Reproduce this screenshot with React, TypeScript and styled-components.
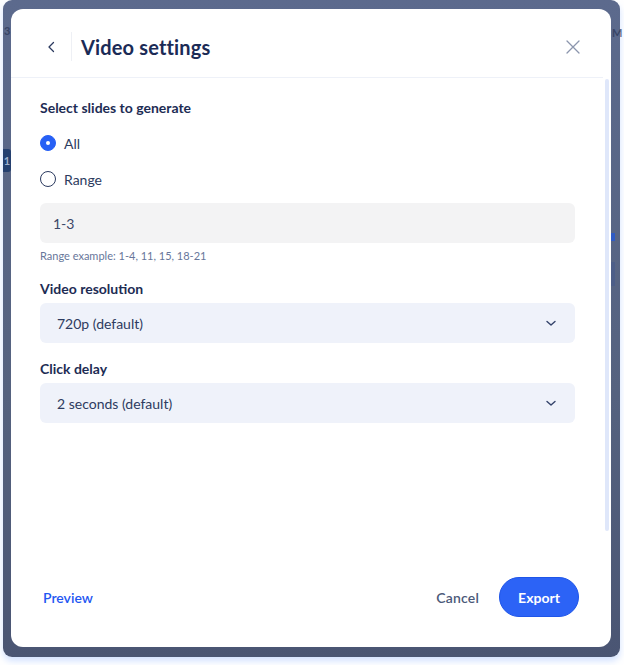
import styled, { createGlobalStyle } from "styled-components";

const GlobalStyle = createGlobalStyle`
  html, body {
    margin: 0;
    padding: 0;
    background: #ffffff;
  }
  body {
    font-family: Lato, "Noto Sans", "Liberation Sans", sans-serif;
    -webkit-font-smoothing: antialiased;
  }
  * {
    box-sizing: border-box;
  }
`;

const Page = styled.div`
  width: 624px;
  height: 665px;
  padding-left: 3px;
`;

const Backdrop = styled.div`
  position: relative;
  width: 617px;
  height: 657px;
  padding: 9px 9px 10px 8px;
  border-radius: 9px;
  background: linear-gradient(180deg, #5c6a8d 0%, #55627f 60%, #4a5573 100%);
  box-shadow: 0 4px 7px rgba(125, 170, 255, 0.35);
`;

// bits of the editor peeking out from under the overlay
const SlideChip = styled.span`
  position: absolute;
  left: 0;
  top: 149px;
  width: 8px;
  height: 23px;
  border-radius: 0 3px 3px 0;
  background: #25406f;
  color: #9fb0cc;
  font-size: 11px;
  font-weight: 700;
  line-height: 23px;
  text-align: center;
`;

const EdgeLetter = styled.span<{ $left: number; $top: number }>`
  position: absolute;
  left: ${(p) => p.$left}px;
  top: ${(p) => p.$top}px;
  color: #2a3556;
  font-size: 11px;
  font-weight: 700;
  opacity: 0.7;
`;

const EdgeMark = styled.span<{ $top: number; $height: number; $color: string }>`
  position: absolute;
  right: 5px;
  top: ${(p) => p.$top}px;
  width: 4px;
  height: ${(p) => p.$height}px;
  background: ${(p) => p.$color};
`;

const Modal = styled.div`
  position: relative;
  width: 600px;
  height: 638px;
  display: flex;
  flex-direction: column;
  background: #ffffff;
  border-radius: 12px;
  overflow: hidden;
`;

const Header = styled.div`
  display: flex;
  align-items: center;
  height: 69px;
  margin-right: 8px;
  padding: 7px 22px 0 33px;
  border-bottom: 1px solid #eef1f8;
`;

const IconButton = styled.button`
  display: flex;
  align-items: center;
  justify-content: center;
  padding: 0;
  border: none;
  background: none;
  cursor: pointer;
`;

const Divider = styled.span`
  width: 1px;
  height: 29px;
  margin: 0 9px 0 11px;
  background: #eef0f5;
`;

const Title = styled.h1`
  flex: 1;
  margin: 0;
  font-size: 20px;
  font-weight: 700;
  color: #1b2b56;
  letter-spacing: 0.15px;
`;

const Body = styled.div`
  flex: 1;
  display: flex;
  min-height: 0;
`;

const Content = styled.div`
  flex: 1;
  display: flex;
  flex-direction: column;
  padding: 20px 30px 0 29px;
`;

const ScrollTrack = styled.div`
  width: 4px;
  margin: 1px 2px 0 0;
  border-radius: 2px;
  background: #dfe7fa;
`;

const Label = styled.div<{ $gap?: number }>`
  margin-top: ${(p) => p.$gap ?? 0}px;
  font-size: 14px;
  font-weight: 700;
  line-height: 20px;
  color: #1d2c54;
`;

const RadioGroup = styled.div`
  display: flex;
  flex-direction: column;
  gap: 16px;
  margin-top: 15px;
`;

const RadioRow = styled.label`
  display: flex;
  align-items: center;
  gap: 8px;
  height: 20px;
  font-size: 14px;
  color: #2d3b60;
  cursor: pointer;
`;

const RadioCircle = styled.span<{ $checked?: boolean }>`
  display: flex;
  align-items: center;
  justify-content: center;
  width: 16px;
  height: 16px;
  border-radius: 50%;
  border: 1.5px solid ${(p) => (p.$checked ? "#2760f5" : "#2b3a5f")};
  background: ${(p) => (p.$checked ? "#2760f5" : "#ffffff")};

  &::after {
    content: "";
    display: ${(p) => (p.$checked ? "block" : "none")};
    width: 4px;
    height: 4px;
    border-radius: 50%;
    background: #ffffff;
  }
`;

const TextInput = styled.div`
  display: flex;
  align-items: center;
  height: 40px;
  margin-top: 14px;
  padding: 0 13px;
  border-radius: 6px;
  background: #f3f3f4;
  font-size: 14px;
  color: #3b4768;
`;

const Hint = styled.div`
  margin-top: 5px;
  font-size: 11px;
  line-height: 16px;
  color: #67769a;
`;

const Select = styled.div`
  display: flex;
  align-items: center;
  justify-content: space-between;
  height: 40px;
  margin-top: 4px;
  padding: 0 18px 0 17px;
  border-radius: 6px;
  background: #eff2fa;
  font-size: 14px;
  color: #2d3b60;
  cursor: pointer;
`;

const Footer = styled.div`
  display: flex;
  align-items: center;
  padding: 46px 32px 30px 32px;
`;

const LinkButton = styled.button`
  margin-right: auto;
  padding: 0;
  border: none;
  background: none;
  font-family: inherit;
  font-size: 14px;
  font-weight: 600;
  color: #1f57f2;
  cursor: pointer;
`;

const GhostButton = styled.button`
  padding: 0;
  border: none;
  background: none;
  font-family: inherit;
  font-size: 14px;
  font-weight: 600;
  color: #4b5979;
  letter-spacing: 0.2px;
  cursor: pointer;
`;

const PrimaryButton = styled.button`
  width: 80px;
  height: 40px;
  margin-left: 20px;
  border: 1px solid #1f55e8;
  border-radius: 20px;
  background: #2c63f6;
  font-family: inherit;
  font-size: 14px;
  font-weight: 700;
  color: #ffffff;
  cursor: pointer;
`;

const ChevronLeft = () => (
  <svg width="16" height="16" viewBox="0 0 16 16" fill="none">
    <path d="M9.5 3.5L5 8l4.5 4.5" stroke="#2b3a5f" strokeWidth="1.3" strokeLinecap="round" strokeLinejoin="round" />
  </svg>
);

const CloseIcon = () => (
  <svg width="16" height="16" viewBox="0 0 16 16" fill="none">
    <path d="M2 2l12 12M14 2L2 14" stroke="#8b95ad" strokeWidth="1.3" strokeLinecap="round" />
  </svg>
);

const ChevronDown = () => (
  <svg width="12" height="12" viewBox="0 0 12 12" fill="none">
    <path d="M2 4.5L6 8l4-3.5" stroke="#33426a" strokeWidth="1.4" strokeLinecap="round" strokeLinejoin="round" />
  </svg>
);

const App = () => {
  return (
    <Page>
      <GlobalStyle />
      <Backdrop>
        <EdgeLetter $left={1} $top={24}>3</EdgeLetter>
        <EdgeLetter $left={609} $top={26}>M</EdgeLetter>
        <SlideChip>1</SlideChip>
        <EdgeMark $top={233} $height={8} $color="#2f5bc4" />
        <EdgeMark $top={262} $height={24} $color="#4d5e88" />
        <Modal>
          <Header>
            <IconButton aria-label="Back">
              <ChevronLeft />
            </IconButton>
            <Divider />
            <Title>Video settings</Title>
            <IconButton aria-label="Close">
              <CloseIcon />
            </IconButton>
          </Header>
          <Body>
            <Content>
              <Label>Select slides to generate</Label>
              <RadioGroup>
                <RadioRow>
                  <RadioCircle $checked />
                  All
                </RadioRow>
                <RadioRow>
                  <RadioCircle />
                  Range
                </RadioRow>
              </RadioGroup>
              <TextInput>1-3</TextInput>
              <Hint>Range example: 1-4, 11, 15, 18-21</Hint>
              <Label $gap={15}>Video resolution</Label>
              <Select>
                720p (default)
                <ChevronDown />
              </Select>
              <Label $gap={16}>Click delay</Label>
              <Select>
                2 seconds (default)
                <ChevronDown />
              </Select>
            </Content>
            <ScrollTrack />
          </Body>
          <Footer>
            <LinkButton>Preview</LinkButton>
            <GhostButton>Cancel</GhostButton>
            <PrimaryButton>Export</PrimaryButton>
          </Footer>
        </Modal>
      </Backdrop>
    </Page>
  );
};

export default App;
